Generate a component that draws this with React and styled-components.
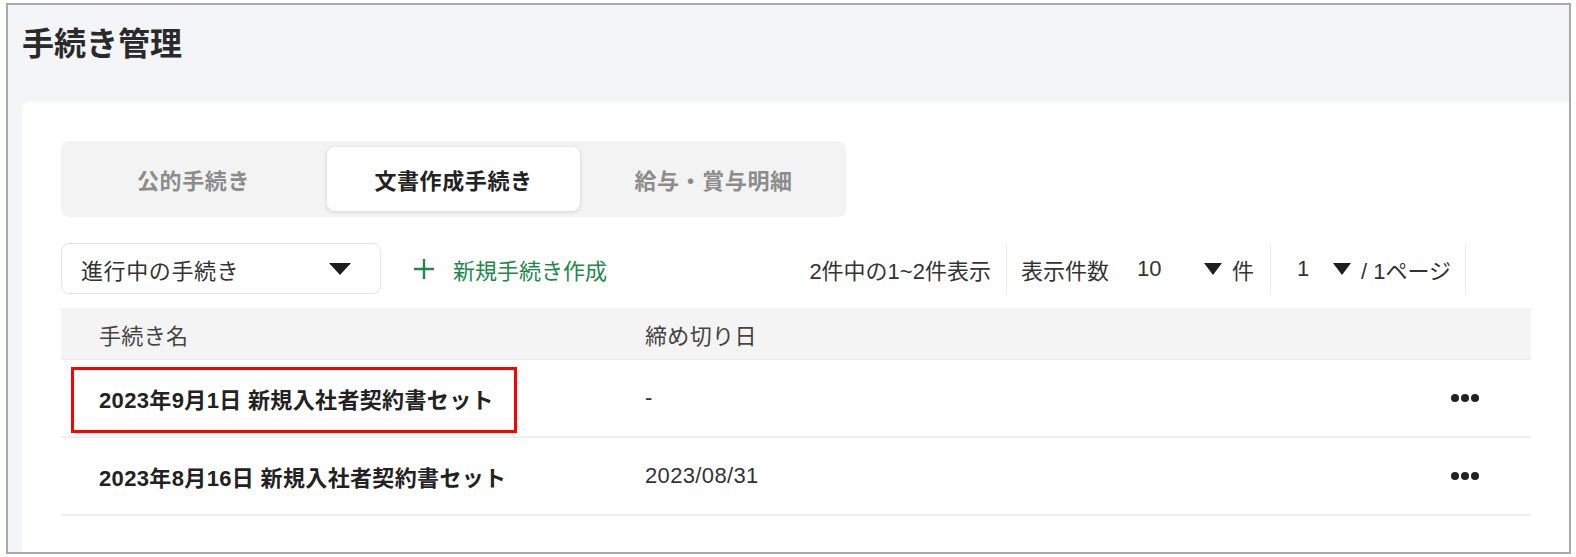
import styled, { createGlobalStyle } from "styled-components";

const GlobalStyle = createGlobalStyle`
  * {
    box-sizing: border-box;
  }
  body {
    margin: 0;
    background: #ffffff;
    font-family: "Liberation Sans", "Noto Sans CJK JP", sans-serif;
    color: #333333;
  }
`;

const Frame = styled.div`
  display: flex;
  flex-direction: column;
  width: 1565px;
  height: 551px;
  margin: 3px 0 0 6px;
  border: 2px solid #a9a9a9;
  background-color: #f4f5f8;
  overflow: hidden;
`;

const Title = styled.h1`
  margin: 0;
  padding: 19px 0 0 14px;
  height: 97px;
  font-size: 32px;
  line-height: 40px;
  font-weight: 700;
  color: #2a2a2a;
`;

const Panel = styled.div`
  flex: 1;
  display: flex;
  flex-direction: column;
  margin-left: 14px;
  padding: 39px 38px 0 39px;
  background-color: #ffffff;
  border-top-left-radius: 6px;
`;

const TabBar = styled.div`
  display: flex;
  align-self: flex-start;
  gap: 7px;
  padding: 6px;
  background-color: #f3f3f3;
  border-radius: 8px;
`;

const Tab = styled.div`
  display: flex;
  align-items: center;
  justify-content: center;
  width: 253px;
  height: 64px;
  border-radius: 8px;
  font-size: 22px;
  letter-spacing: 0.6px;
  font-weight: 700;
  color: ${({ $active }) => ($active ? "#222222" : "#8c8c8c")};
  background-color: ${({ $active }) => ($active ? "#ffffff" : "transparent")};
  box-shadow: ${({ $active }) =>
    $active ? "0 1px 4px rgba(0, 0, 0, 0.14)" : "none"};
`;

const Toolbar = styled.div`
  display: flex;
  align-items: center;
  height: 51px;
  margin-top: 26px;
`;

const Dropdown = styled.div`
  display: flex;
  align-items: center;
  justify-content: space-between;
  width: 320px;
  height: 51px;
  padding: 0 29px 0 19px;
  border: 1px solid #e4e4e4;
  border-radius: 8px;
  font-size: 22px;
  letter-spacing: 0.6px;
  color: #333333;
`;

const AddButton = styled.div`
  display: flex;
  align-items: center;
  gap: 18px;
  margin-left: 32px;
  font-size: 22px;
  color: #23874c;
`;

const Pager = styled.div`
  display: flex;
  align-items: stretch;
  height: 50px;
  margin-left: auto;
  margin-right: 65px;
  font-size: 22px;
  color: #333333;
`;

const PagerItem = styled.div`
  display: flex;
  align-items: center;
  padding: ${({ $pad }) => $pad};
  border-right: 1px solid #ececec;
`;

const SelectValue = styled.div`
  display: flex;
  align-items: center;
  justify-content: space-between;
  width: ${({ $w }) => $w}px;
  margin: ${({ $m }) => $m};
`;

const Table = styled.div`
  margin-top: 14px;
  font-size: 22px;
  letter-spacing: 0.35px;
`;

const HeadRow = styled.div`
  display: grid;
  grid-template-columns: 584px 1fr 120px;
  align-items: stretch;
  height: 52px;
  background-color: #f4f4f4;
  border-bottom: 1px solid #ebebeb;
  color: #444444;
`;

const Row = styled.div`
  display: grid;
  grid-template-columns: 584px 1fr 120px;
  align-items: stretch;
  height: 78px;
  border-bottom: 2px solid #efefef;
`;

const NameCell = styled.div`
  position: relative;
  display: flex;
  align-items: center;
  padding-left: 38px;
  font-weight: ${({ $bold }) => ($bold ? 700 : 400)};
  color: ${({ $bold }) => ($bold ? "#222222" : "#444444")};
`;

const Cell = styled.div`
  display: flex;
  align-items: center;
`;

const Highlight = styled.div`
  position: absolute;
  left: 10px;
  top: 7px;
  width: 446px;
  height: 66px;
  border: 3px solid #ff0000;
`;

const MenuCell = styled.div`
  display: flex;
  align-items: center;
  justify-content: flex-end;
  gap: 2px;
  padding-right: 52px;
`;

const Dot = styled.span`
  width: 8px;
  height: 8px;
  border-radius: 50%;
  background-color: #222222;
`;

const Triangle = ({ w = 18, h = 12 }) => (
  <svg width={w} height={h} viewBox="0 0 18 12" preserveAspectRatio="none">
    <polygon points="0,0 18,0 9,12" fill="#1e1e1e" />
  </svg>
);

const Plus = () => (
  <svg width="22" height="22" viewBox="0 0 22 22">
    <path d="M11 1 V21 M1 11 H21" stroke="#23874c" strokeWidth="2.4" />
  </svg>
);

const Dots = () => (
  <MenuCell>
    <Dot />
    <Dot />
    <Dot />
  </MenuCell>
);

const rows = [
  { name: "2023年9月1日 新規入社者契約書セット", due: "-", marked: true },
  { name: "2023年8月16日 新規入社者契約書セット", due: "2023/08/31" },
];

const App = () => {
  return (
    <>
      <GlobalStyle />
      <Frame>
        <Title>手続き管理</Title>
        <Panel>
          <TabBar>
            <Tab>公的手続き</Tab>
            <Tab $active>文書作成手続き</Tab>
            <Tab>給与・賞与明細</Tab>
          </TabBar>

          <Toolbar>
            <Dropdown>
              <span>進行中の手続き</span>
              <Triangle w={22} h={12} />
            </Dropdown>
            <AddButton>
              <Plus />
              <span>新規手続き作成</span>
            </AddButton>
            <Pager>
              <PagerItem $pad="0 15px 0 0">2件中の1~2件表示</PagerItem>
              <PagerItem $pad="0 16px 0 14px">
                表示件数
                <SelectValue $w={85} $m="0 10px 0 28px">
                  <span>10</span>
                  <Triangle />
                </SelectValue>
                件
              </PagerItem>
              <PagerItem $pad="0 14px 0 26px">
                <SelectValue $w={54} $m="0 10px 0 0">
                  <span>1</span>
                  <Triangle />
                </SelectValue>
                / 1ページ
              </PagerItem>
            </Pager>
          </Toolbar>

          <Table>
            <HeadRow>
              <NameCell>手続き名</NameCell>
              <Cell>締め切り日</Cell>
              <span />
            </HeadRow>
            {rows.map((r) => (
              <Row key={r.name}>
                <NameCell $bold>
                  {r.name}
                  {r.marked && <Highlight />}
                </NameCell>
                <Cell>{r.due}</Cell>
                <Dots />
              </Row>
            ))}
          </Table>
        </Panel>
      </Frame>
    </>
  );
};

export default App;
